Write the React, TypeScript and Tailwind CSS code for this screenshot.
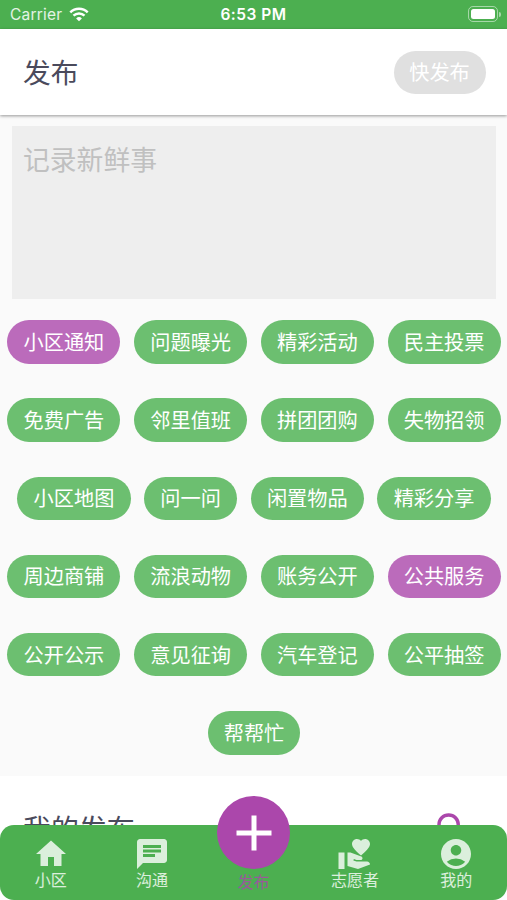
import { useState } from 'react';
import {
  MdAccountCircle,
  MdAdd,
  MdChat,
  MdHome,
  MdSearch,
  MdVolunteerActivism,
} from 'react-icons/md';
import type { IconType } from 'react-icons';

interface TabItem {
  label: string;
  icon: IconType;
}

const tagRows: string[][] = [
  ['小区通知', '问题曝光', '精彩活动', '民主投票'],
  ['免费广告', '邻里值班', '拼团团购', '失物招领'],
  ['小区地图', '问一问', '闲置物品', '精彩分享'],
  ['周边商铺', '流浪动物', '账务公开', '公共服务'],
  ['公开公示', '意见征询', '汽车登记', '公平抽签'],
  ['帮帮忙'],
];

const leftTabs: TabItem[] = [
  { label: '小区', icon: MdHome },
  { label: '沟通', icon: MdChat },
];

const rightTabs: TabItem[] = [
  { label: '志愿者', icon: MdVolunteerActivism },
  { label: '我的', icon: MdAccountCircle },
];

function StatusBar() {
  return (
    <div className="grid h-[29px] shrink-0 grid-cols-3 items-center bg-[#4caf50] pl-[10px] pr-[6px] font-['Inter','Liberation_Sans',sans-serif] text-white">
      <div className="flex items-center gap-[7px]">
        <span className="text-[15.5px] tracking-[0.2px] text-white/85">Carrier</span>
        <svg width="20" height="15" viewBox="0 0 21 16" fill="none">
          <path d="M1.2 5.7a13.4 13.4 0 0 1 18.6 0" stroke="white" strokeWidth="2.7" />
          <path d="M4.6 9.3a8.5 8.5 0 0 1 11.8 0" stroke="white" strokeWidth="2.6" />
          <path d="M7.4 12.2a4.5 4.5 0 0 1 6.2 0L10.5 15.3z" fill="white" />
        </svg>
      </div>
      <span className="ml-[-4px] whitespace-nowrap text-center text-[15.5px] font-semibold tracking-[0.5px]">
        6:53 PM
      </span>
      <div className="flex items-center justify-end gap-[1px] pb-[1px]">
        <div className="h-[16px] w-[30px] rounded-[5px] border border-white/50 p-[2px]">
          <div className="h-full w-full rounded-[2.5px] bg-white" />
        </div>
        <div className="h-[5px] w-[2px] rounded-r-full bg-white/50" />
      </div>
    </div>
  );
}

function Tab({ label, icon: Icon }: TabItem) {
  return (
    <button type="button" className="flex flex-1 flex-col items-center pt-[11px] text-white/80">
      <Icon size={36} />
      <span className="mt-[-3px] text-[16px] leading-[20px]">{label}</span>
    </button>
  );
}

function App() {
  const [selected, setSelected] = useState<string[]>(['小区通知', '公共服务']);
  const [texto, setTexto] = useState('');

  function toggle(tag: string) {
    setSelected((prev) =>
      prev.includes(tag) ? prev.filter((t) => t !== tag) : [...prev, tag],
    );
  }

  return (
    <div className="relative flex h-[900px] w-[507px] flex-col overflow-hidden bg-white font-['Noto_Sans_CJK_SC',sans-serif]">
      <StatusBar />

      <header className="z-10 flex h-[86px] shrink-0 items-center justify-between bg-white pl-[23px] pr-[21.5px] shadow-[0_1px_3px_rgba(0,0,0,0.4)]">
        <h1 className="pb-[2px] text-[27.7px] leading-[40px] text-[#4a4a5c]">发布</h1>
        <button
          type="button"
          className="h-[43px] w-[92px] rounded-full bg-[#e0e0e0] text-[20.2px] text-white"
        >
          快发布
        </button>
      </header>

      <main className="flex h-[661px] shrink-0 flex-col bg-[#fafafa] pt-[11px]">
        <textarea
          value={texto}
          onChange={(e) => setTexto(e.target.value)}
          placeholder="记录新鲜事"
          className="ml-[12px] mr-[11px] h-[172.5px] shrink-0 resize-none bg-[#eeeeee] px-[11px] py-[13px] text-[26.8px] leading-[40px] text-[#4a4a5c] outline-none placeholder:text-[#c0c0c0]"
        />
        <div className="mt-[21.8px] flex flex-col gap-[34.9px]">
          {tagRows.map((row) => (
            <div key={row[0]} className="flex justify-center gap-[13.6px] pl-[1px]">
              {row.map((tag) => (
                <button
                  key={tag}
                  type="button"
                  onClick={() => toggle(tag)}
                  className={`h-[43.3px] whitespace-nowrap rounded-full px-[16.2px] text-[20.2px] text-white ${
                    selected.includes(tag) ? 'bg-[#bb6bbb]' : 'bg-[#6cbf70]'
                  }`}
                >
                  {tag}
                </button>
              ))}
            </div>
          ))}
        </div>
      </main>

      <section className="flex items-start justify-between pl-[23px] pr-[33px] pt-[32px]">
        <h2 className="mt-[-3px] text-[27.9px] leading-[46px] text-[#4a4a5c]">我的发布</h2>
        <MdSearch size={42} className="text-[#ab47ab]" />
      </section>

      <nav className="absolute inset-x-0 bottom-0 z-20 flex h-[75.5px] rounded-[14px] bg-[#4caf50]">
        {leftTabs.map((tab) => (
          <Tab key={tab.label} {...tab} />
        ))}
        <button type="button" className="flex flex-1 flex-col items-center text-[#ab47ab]">
          <span className="mt-[-28.5px] flex size-[73px] shrink-0 items-center justify-center rounded-full bg-[#ab47ab] text-white">
            <MdAdd size={60} />
          </span>
          <span className="mt-[2px] text-[16px] leading-[20px] opacity-80">发布</span>
        </button>
        {rightTabs.map((tab) => (
          <Tab key={tab.label} {...tab} />
        ))}
      </nav>
    </div>
  );
}

export default App;
